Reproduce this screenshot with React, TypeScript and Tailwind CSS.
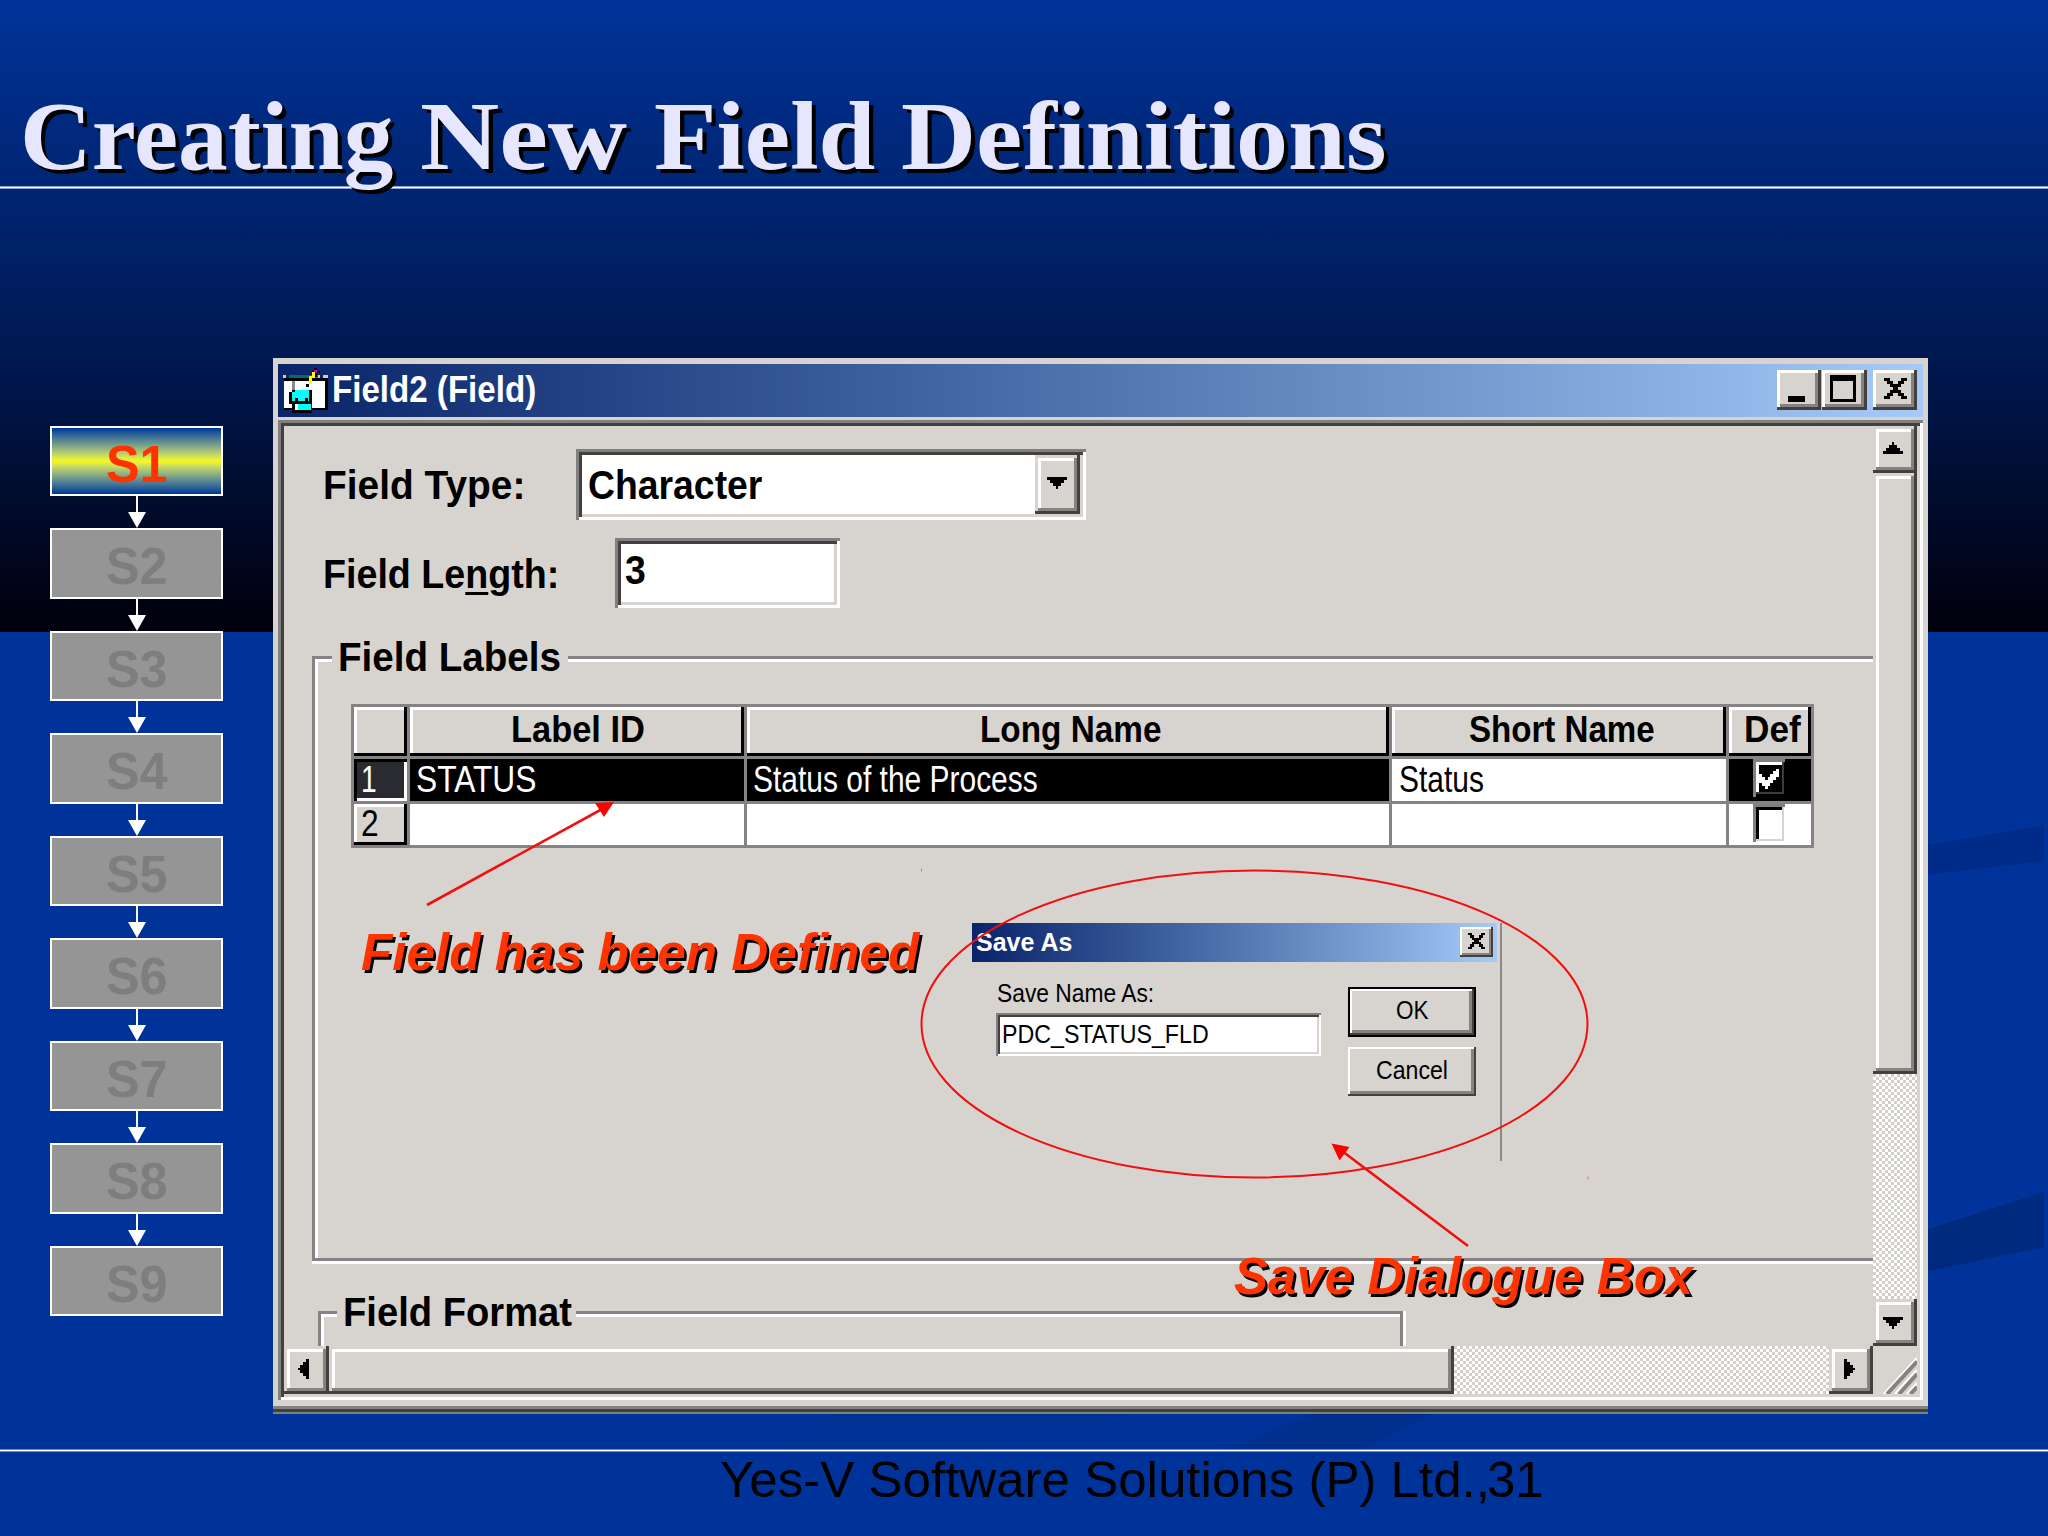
import { useLayoutEffect, useRef, useState, type ReactNode } from "react";
import clsx from "clsx";

const steps = ["S1", "S2", "S3", "S4", "S5", "S6", "S7", "S8", "S9"];

const sunken =
  "shadow-[inset_3px_3px_0_#808080,inset_-3px_-3px_0_#fff,inset_6px_6px_0_#43403e,inset_-6px_-6px_0_#d7d3cf]";
const raised =
  "bg-[#d7d3cf] shadow-[inset_-3px_-3px_0_#43403e,inset_3px_3px_0_#d7d3cf,inset_-6px_-6px_0_#858280,inset_6px_6px_0_#fff]";
const captionButton =
  "bg-[#d7d3cf] shadow-[inset_-3px_-3px_0_#43403e,inset_3px_3px_0_#fff,inset_-6px_-6px_0_#858280]";
const headCell = "bg-[#d7d3cf] shadow-[inset_-3px_-3px_0_#000,inset_3px_3px_0_#fff]";
const track = "bg-[repeating-conic-gradient(#fff_0_25%,#d3cfca_0_50%)] bg-[length:6px_6px]";

// Squeezes or stretches one line of text to a fixed width
function Fit({ width, className, children }: { width: number; className?: string; children: ReactNode }) {
  const ref = useRef<HTMLSpanElement>(null);
  const [scale, setScale] = useState(1);

  useLayoutEffect(() => {
    if (ref.current) setScale(width / ref.current.offsetWidth);
  }, [width]);

  return (
    <div className={clsx("shrink-0 leading-none", className)} style={{ width }}>
      <span
        ref={ref}
        className="inline-block origin-left whitespace-pre"
        style={{ transform: `scaleX(${scale})` }}
      >
        {children}
      </span>
    </div>
  );
}

function Glyph({ points, className }: { points: string; className?: string }) {
  return (
    <svg viewBox="0 0 20 20" className={clsx("size-5", className)} shapeRendering="crispEdges">
      <polygon points={points} fill="#000" />
    </svg>
  );
}

const down = "0,4 20,4 20,7 17,7 17,10 14,10 14,13 11,13 11,16 9,16 9,13 6,13 6,10 3,10 3,7 0,7";
const up = "0,16 20,16 20,13 17,13 17,10 14,10 14,7 11,7 11,4 9,4 9,7 6,7 6,10 3,10 3,13 0,13";
const left = "15,0 15,20 12,20 12,17 9,17 9,14 6,14 6,11 4,11 4,9 6,9 6,6 9,6 9,3 12,3 12,0";
const right = "5,0 5,20 8,20 8,17 11,17 11,14 14,14 14,11 16,11 16,9 14,9 14,6 11,6 11,3 8,3 8,0";

function CloseGlyph({ className }: { className?: string }) {
  return (
    <svg viewBox="0 0 8 7" className={className} shapeRendering="crispEdges" preserveAspectRatio="none">
      <path
        d="M0 0h2v1h1v1h2v-1h1v-1h2v1h-1v1h-1v1h-1v1h1v1h1v1h1v1h-2v-1h-1v-1h-2v1h-1v1h-2v-1h1v-1h1v-1h1v-1h-1v-1h-1v-1h-1z"
        fill="#000"
      />
    </svg>
  );
}

function FormIcon() {
  return (
    <svg viewBox="0 0 138 138" className="h-[46px] w-[46px]" shapeRendering="crispEdges">
      <rect x="0" y="24" width="135" height="9" fill="#c8ccd0" />
      <rect x="18" y="24" width="86" height="9" fill="#006b70" />
      <rect x="8" y="24" width="10" height="9" fill="#0a246a" />
      <rect x="112" y="24" width="8" height="9" fill="#0a246a" />
      <rect x="2" y="33" width="133" height="9" fill="#000" />
      <rect x="2" y="42" width="124" height="81" fill="#fff" />
      <rect x="126" y="36" width="9" height="94" fill="#000" />
      <rect x="2" y="123" width="133" height="7" fill="#000" />
      <rect x="27" y="42" width="8" height="28" fill="#8a8a8a" />
      <rect x="94" y="2" width="9" height="9" fill="#000" />
      <rect x="86" y="11" width="26" height="8" fill="#000" />
      <rect x="94" y="9" width="9" height="9" fill="#c0c" />
      <rect x="86" y="16" width="9" height="17" fill="#ff0" />
      <rect x="95" y="19" width="8" height="12" fill="#000" />
      <rect x="78" y="28" width="9" height="22" fill="#ff0" />
      <rect x="69" y="50" width="9" height="9" fill="#000" />
      <rect x="27" y="68" width="8" height="9" fill="#000" />
      <rect x="78" y="68" width="8" height="9" fill="#000" />
      <rect x="18" y="76" width="9" height="36" fill="#000" />
      <rect x="77" y="76" width="9" height="44" fill="#000" />
      <rect x="27" y="76" width="50" height="36" fill="#0ff" />
      <rect x="35" y="68" width="43" height="9" fill="#0ff" />
      <rect x="27" y="102" width="8" height="18" fill="#000" />
      <rect x="35" y="94" width="9" height="9" fill="#000" />
      <rect x="66" y="94" width="9" height="9" fill="#000" />
      <rect x="35" y="103" width="42" height="9" fill="#000" />
      <rect x="27" y="120" width="59" height="17" fill="#000" />
      <rect x="35" y="112" width="50" height="18" fill="#0ff" />
      <rect x="35" y="112" width="9" height="16" fill="#fff" />
    </svg>
  );
}

function Sidebar() {
  return (
    <nav className="mt-[236.5px] ml-[50px] flex w-[173px] flex-col">
      {steps.map((step, i) => (
        <div key={step} className="flex flex-col items-center">
          {i > 0 && (
            <svg viewBox="0 0 18 32" className="h-8 w-[18px]">
              <path d="M8 0h2v16h8L9 32 0 16h8z" fill="#fff" />
            </svg>
          )}
          <div
            className={clsx(
              "flex h-[70.5px] w-full items-center justify-center border-2 border-white text-[52px] leading-none font-bold",
              i === 0
                ? "bg-linear-to-b from-[#003399] via-[#f6fa00] to-[#003399] text-[#ff3300]"
                : "bg-[#959595] text-[#7e7e7e]"
            )}
          >
            <Fit width={62} className="pt-[6px]">{step}</Fit>
          </div>
        </div>
      ))}
    </nav>
  );
}

function TitleBar() {
  return (
    <div className="flex h-[53px] w-[1645px] items-start bg-linear-to-r from-[#0a246a] to-[#a6caf8]">
      <div className="mt-[3px] ml-[5px]">
        <FormIcon />
      </div>
      <Fit width={204} className="mt-[7px] ml-[3px] text-[37px] font-bold text-white">
        Field2 (Field)
      </Fit>
      <div className="mt-[6px] mr-[6px] ml-auto flex">
        <div className={clsx("flex h-10 w-11 items-start pt-[26px] pl-[11px]", captionButton)}>
          <div className="h-[6px] w-[17px] bg-black" />
        </div>
        <div className={clsx("ml-px flex h-10 w-[45px] items-start pt-[5px] pl-2", captionButton)}>
          <div className="h-[27px] w-[26px] border-[3px] border-t-[6px] border-black" />
        </div>
        <div className={clsx("ml-[6px] flex h-10 w-[44px] items-start pt-2 pl-[11px]", captionButton)}>
          <CloseGlyph className="h-[21px] w-[23px]" />
        </div>
      </div>
    </div>
  );
}

function CheckBox({ checked }: { checked?: boolean }) {
  return (
    <div
      className={clsx(
        "mr-[2px] h-[38px] w-8 p-[6px]",
        checked
          ? "bg-black shadow-[inset_3px_3px_0_#808080,inset_-1px_-3px_0_#000,inset_-3px_-5px_0_#3a3a3a,inset_6px_6px_0_#fff]"
          : "bg-white shadow-[inset_3px_3px_0_#808080,inset_-1px_-1px_0_#fff,inset_-3px_-3px_0_#d7d3cf,inset_6px_6px_0_#000]"
      )}
    >
      {checked && (
        <svg viewBox="0 0 7 7" className="mt-[3px] h-[21px] w-[20px]" shapeRendering="crispEdges">
          <path d="M0 2h1v1h1v1h1v-1h1v-1h1v-1h1v-1h1v3h-1v1h-1v1h-1v1h-1v1h-1v-1h-1v-1h-1z" fill="#fff" />
        </svg>
      )}
    </div>
  );
}

function LabelTable() {
  return (
    <div className="grid h-[144px] w-[1463px] grid-cols-[53px_334px_642px_334px_82px] grid-rows-[49px_42px_41px] gap-[3px] border-[3px] border-[#858383] bg-[#858383] text-[37px]">
      <div className={headCell} />
      <div className={headCell}>
        <Fit width={134} className="mt-[4px] ml-[101px] font-bold">Label ID</Fit>
      </div>
      <div className={headCell}>
        <Fit width={181} className="mt-[4px] ml-[233px] font-bold">Long Name</Fit>
      </div>
      <div className={headCell}>
        <Fit width={186} className="mt-[4px] ml-[77px] font-bold">Short Name</Fit>
      </div>
      <div className={headCell}>
        <Fit width={57} className="mt-[4px] ml-[15px] font-bold">Def</Fit>
      </div>

      <div className="bg-[#2a2b30] text-white shadow-[inset_3px_3px_0_#000,inset_-3px_-3px_0_#fff]">
        <Fit width={16} className="mt-[2px] ml-[7px]">1</Fit>
      </div>
      <div className="bg-black text-white">
        <Fit width={120} className="mt-[2px] ml-[6px]">STATUS</Fit>
      </div>
      <div className="bg-black text-white">
        <Fit width={285} className="mt-[2px] ml-[6px]">Status of the Process</Fit>
      </div>
      <div className="bg-white">
        <Fit width={85} className="mt-[2px] ml-[7px]">Status</Fit>
      </div>
      <div className="flex justify-center bg-black">
        <CheckBox checked />
      </div>

      <div className={headCell}>
        <Fit width={18} className="mt-[1px] ml-[7px]">2</Fit>
      </div>
      <div className="bg-white" />
      <div className="bg-white" />
      <div className="bg-white" />
      <div className="flex justify-center bg-white">
        <CheckBox />
      </div>
    </div>
  );
}

function FieldForm() {
  return (
    <div className="flex flex-col overflow-hidden text-[41px] font-bold">
      <div className="mt-[23px] flex h-[71px] shrink-0 items-start">
        <Fit width={202} className="mt-4 ml-[39px]">Field Type:</Fit>
        <div className={clsx("ml-[51px] flex h-[71px] w-[510px] items-start bg-white p-[6px]", sunken)}>
          <Fit width={174} className="mt-[10px] ml-[6px]">Character</Fit>
          <div className={clsx("ml-auto flex h-[59px] w-[45px] items-center justify-center", raised)}>
            <Glyph points={down} className="-mt-1 -ml-[2px]" />
          </div>
        </div>
      </div>

      <div className="mt-[18px] flex h-[70px] shrink-0 items-start">
        <Fit width={236} className="mt-4 ml-[39px]">
          Field Le<span className="underline decoration-3 underline-offset-4">n</span>gth:
        </Fit>
        <div className={clsx("ml-[56px] h-[70px] w-[225px] bg-white p-[6px]", sunken)}>
          <Fit width={21} className="mt-[6px] ml-[4px]">3</Fit>
        </div>
      </div>

      <section className="relative mt-[48px] ml-7 h-[608px] shrink-0 border-b-[3px] border-white">
        <div className="h-[605px] border-y-[3px] border-l-[3px] border-[#858383] pt-[45px] pl-[36px] shadow-[inset_3px_3px_0_#fff] font-normal">
          <LabelTable />
        </div>
        <div className="absolute -top-[19px] left-5 bg-[#d7d3cf] pr-[7px] pl-[6px]">
          <Fit width={223}>Field Labels</Fit>
        </div>
      </section>

      <section className="relative mt-[47px] ml-[34px] h-[60px] w-[1088px] shrink-0 border-r-[3px] border-white">
        <div className="h-[60px] border-[3px] border-[#858383] shadow-[inset_3px_3px_0_#fff]" />
        <div className="absolute -top-[19px] left-[19px] bg-[#d7d3cf] pr-[4px] pl-[6px]">
          <Fit width={229}>Field Format</Fit>
        </div>
      </section>
    </div>
  );
}

function FieldWindow() {
  return (
    <div className="mt-[169px] ml-[50px] flex h-[1056px] w-[1655px] flex-col border-b-2 border-[#7b807c] bg-[#d7d3cf] pt-[6px] pl-[5px] shadow-[inset_0_-3px_0_#43403e,inset_0_-6px_0_#858280]">
      <TitleBar />
      <div className={clsx("mt-[3px] h-[980px] w-[1645px] p-[6px]", sunken)}>
        <div className="grid h-[968px] grid-cols-[1589px_44px] grid-rows-[920px_48px]">
          <FieldForm />
          <div className={clsx("flex flex-col", track)}>
            <div className={clsx("flex h-[47px] items-center justify-center", raised)}>
              <Glyph points={up} className="-mt-1 -ml-1" />
            </div>
            <div className={clsx("h-[601px]", raised)} />
            <div className={clsx("mt-auto flex h-[47px] items-center justify-center", raised)}>
              <Glyph points={down} className="-ml-1" />
            </div>
          </div>
          <div className={clsx("flex", track)}>
            <div className={clsx("flex w-[45px] items-center justify-center", raised)}>
              <Glyph points={left} className="-mt-[2px] -ml-[5px]" />
            </div>
            <div className={clsx("w-[1125px]", raised)} />
            <div className={clsx("ml-auto flex w-11 items-center justify-center", raised)}>
              <Glyph points={right} className="-mt-[2px] -ml-1" />
            </div>
          </div>
          <svg viewBox="0 0 44 48" className="h-12 w-11">
            <g stroke="#fff" strokeWidth="2.5">
              <path d="M11 48 44 12M22 48 44 24M34 48 44 37" />
            </g>
            <g stroke="#858280" strokeWidth="4">
              <path d="M14 48 44 15.5M26 48 44 28M37.5 48 44 41" />
            </g>
          </svg>
        </div>
      </div>
    </div>
  );
}

function SaveDialog() {
  return (
    <div className="absolute top-[923px] left-[972px] h-[238px] w-[530px] border-r-2 border-[#8b8988] bg-[#d7d3cf]">
      <div className="flex h-[39px] w-[525px] items-start bg-linear-to-r from-[#0a246a] to-[#a6caf8]">
        <Fit width={96} className="mt-[7px] ml-[4px] text-[25px] font-bold text-white">Save As</Fit>
        <div className="mt-1 mr-[4px] ml-auto flex h-[30px] w-[33px] items-start bg-[#d7d3cf] pt-[6px] pl-2 shadow-[inset_-2px_-2px_0_#43403e,inset_2px_2px_0_#fff,inset_-4px_-4px_0_#858280]">
          <CloseGlyph className="h-[16px] w-[17px]" />
        </div>
      </div>
      <div className="flex items-start text-[26px]">
        <div className="mt-[18px] ml-6 w-[325px]">
          <Fit width={157} className="ml-[1px]">Save Name As:</Fit>
          <div className="mt-[7px] h-[43px] bg-white p-1 shadow-[inset_2px_2px_0_#808080,inset_-2px_-2px_0_#fff,inset_4px_4px_0_#43403e,inset_-4px_-4px_0_#d7d3cf]">
            <Fit width={207} className="mt-[4px] ml-[2px]">PDC_STATUS_FLD</Fit>
          </div>
        </div>
        <div className="mt-[25px] ml-[27px] w-[128px]">
          <div className="h-[50px] border-2 border-black pt-[8px] pl-[46px] shadow-[inset_-2px_-2px_0_#43403e,inset_2px_2px_0_#fff,inset_-5px_-5px_0_#858280]">
            <Fit width={33}>OK</Fit>
          </div>
          <div className="mt-[10px] h-[49px] pt-[10px] pl-[28px] shadow-[inset_-2px_-2px_0_#43403e,inset_2px_2px_0_#fff,inset_-5px_-5px_0_#858280]">
            <Fit width={72}>Cancel</Fit>
          </div>
        </div>
      </div>
    </div>
  );
}

function Annotations() {
  return (
    <>
      <svg viewBox="0 0 2048 1536" className="absolute inset-0 h-[1536px] w-[2048px]">
        <ellipse cx="1254.5" cy="1024" rx="333" ry="153.5" fill="none" stroke="#f01010" strokeWidth="2" />
        <path d="M921.5 868.5v3M1588 1176.5v3" stroke="#f66" />
        <path d="M427 905 604 808M1468 1246 1342 1151" stroke="#f01010" strokeWidth="2.6" />
        <path d="M614 802 595 803 604 817zM1331.5 1143.5 1349.5 1147 1339.5 1160.5z" fill="#ff0000" />
      </svg>
      <div className="absolute top-[926px] left-[361px] text-[52px] font-bold text-[#ff3300] italic [text-shadow:2.5px_2.5px_0_#000]">
        <Fit width={558}>Field has been Defined</Fit>
      </div>
      <div className="absolute top-[1250px] left-[1234px] text-[52px] font-bold text-[#ff3300] italic [text-shadow:2.5px_2.5px_0_#000]">
        <Fit width={459}>Save Dialogue Box</Fit>
      </div>
    </>
  );
}

export default function App() {
  return (
    <div className="relative flex h-[1536px] w-[2048px] flex-col overflow-hidden bg-[#003399] font-['Liberation_Sans',Arial,sans-serif] text-black">
      <div className="absolute inset-x-0 top-0 h-[632px] bg-[linear-gradient(#003399,#001850_57%,#00000c)]" />
      <svg viewBox="0 0 2048 1536" className="absolute inset-0 h-[1536px] w-[2048px]">
        <path d="M1900 850 2044 825v36l-144 17z" fill="#002b88" />
        <path d="M1900 1238 2044 1192v55l-144 30z" fill="#002a7e" />
        <path d="M1310 1414h120l-65 35h-137z" fill="#00308e" />
        <path d="M832 1414h300l-150 35h-202z" fill="#003194" />
      </svg>

      <header className="relative z-10 flex h-[186px] shrink-0 pt-[87px] pl-[20px] font-['Liberation_Serif',serif] text-[98px] font-bold text-[#e6e6ff] [text-shadow:4px_4px_0_#000]">
        <Fit width={373}>Creating</Fit>
        <Fit width={207} className="ml-[27px]">New</Fit>
        <Fit width={221} className="ml-[27px]">Field</Fit>
        <Fit width={485} className="ml-[26px]">Definitions</Fit>
      </header>
      <div className="relative h-[3px] shrink-0 border-y border-[#8ea2d6] bg-white" />

      <main className="relative flex h-[1260px] shrink-0 items-start">
        <Sidebar />
        <FieldWindow />
      </main>

      <div className="relative h-[3px] shrink-0 border-y border-[#6f8bcc] bg-white" />
      <footer className="relative flex pt-[3px] pl-[720px] text-[50px]">
        <Fit width={824}>
          Yes-V Software Solutions (P) Ltd.<span className="-tracking-[3px]">,</span>31
        </Fit>
      </footer>

      <SaveDialog />
      <Annotations />
    </div>
  );
}
